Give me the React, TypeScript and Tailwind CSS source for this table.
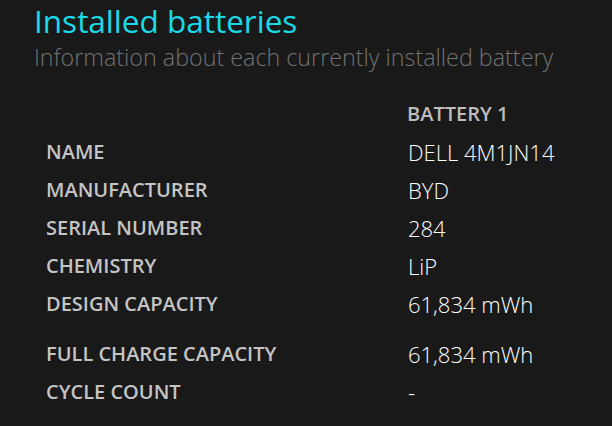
const rows: [string, string][] = [
  ['NAME', 'DELL 4M1JN14'],
  ['MANUFACTURER', 'BYD'],
  ['SERIAL NUMBER', '284'],
  ['CHEMISTRY', 'LiP'],
  ['DESIGN CAPACITY', '61,834 mWh'],
];

const rows2: [string, string][] = [
  ['FULL CHARGE CAPACITY', '61,834 mWh'],
  ['CYCLE COUNT', '-'],
];

function Row({ label, value }: { label: string; value: string }) {
  return (
    <div className="grid grid-cols-[362px_1fr] h-[38px] items-center">
      <div className="text-[20px] font-semibold text-[#c4c4c4]">{label}</div>
      <div className="text-[22px] font-light text-white">{value}</div>
    </div>
  );
}

export default function App() {
  return (
    <div
      className="w-[612px] h-[426px] bg-[#191919] overflow-hidden"
      style={{ fontFamily: '"Open Sans", "Noto Sans", sans-serif' }}
    >
      <div className="pl-[34px] pt-[1px]">
        <h1 className="text-[31.5px] leading-[40px] text-[#1ad9e8]">Installed batteries</h1>
        <p className="mt-[1px] text-[23.3px] leading-[30px] font-light text-[#727272]">
          Information about each currently installed battery
        </p>
      </div>
      <div className="pl-[46px] pt-[23px]">
        <div className="grid grid-cols-[362px_1fr] h-[38px] items-center">
          <div />
          <div className="text-[20px] font-semibold text-[#bdbdbd] -ml-px">BATTERY 1</div>
        </div>
        {rows.map(([l, v]) => (
          <Row key={l} label={l} value={v} />
        ))}
        <div className="h-[12px]" />
        {rows2.map(([l, v]) => (
          <Row key={l} label={l} value={v} />
        ))}
      </div>
    </div>
  );
}
